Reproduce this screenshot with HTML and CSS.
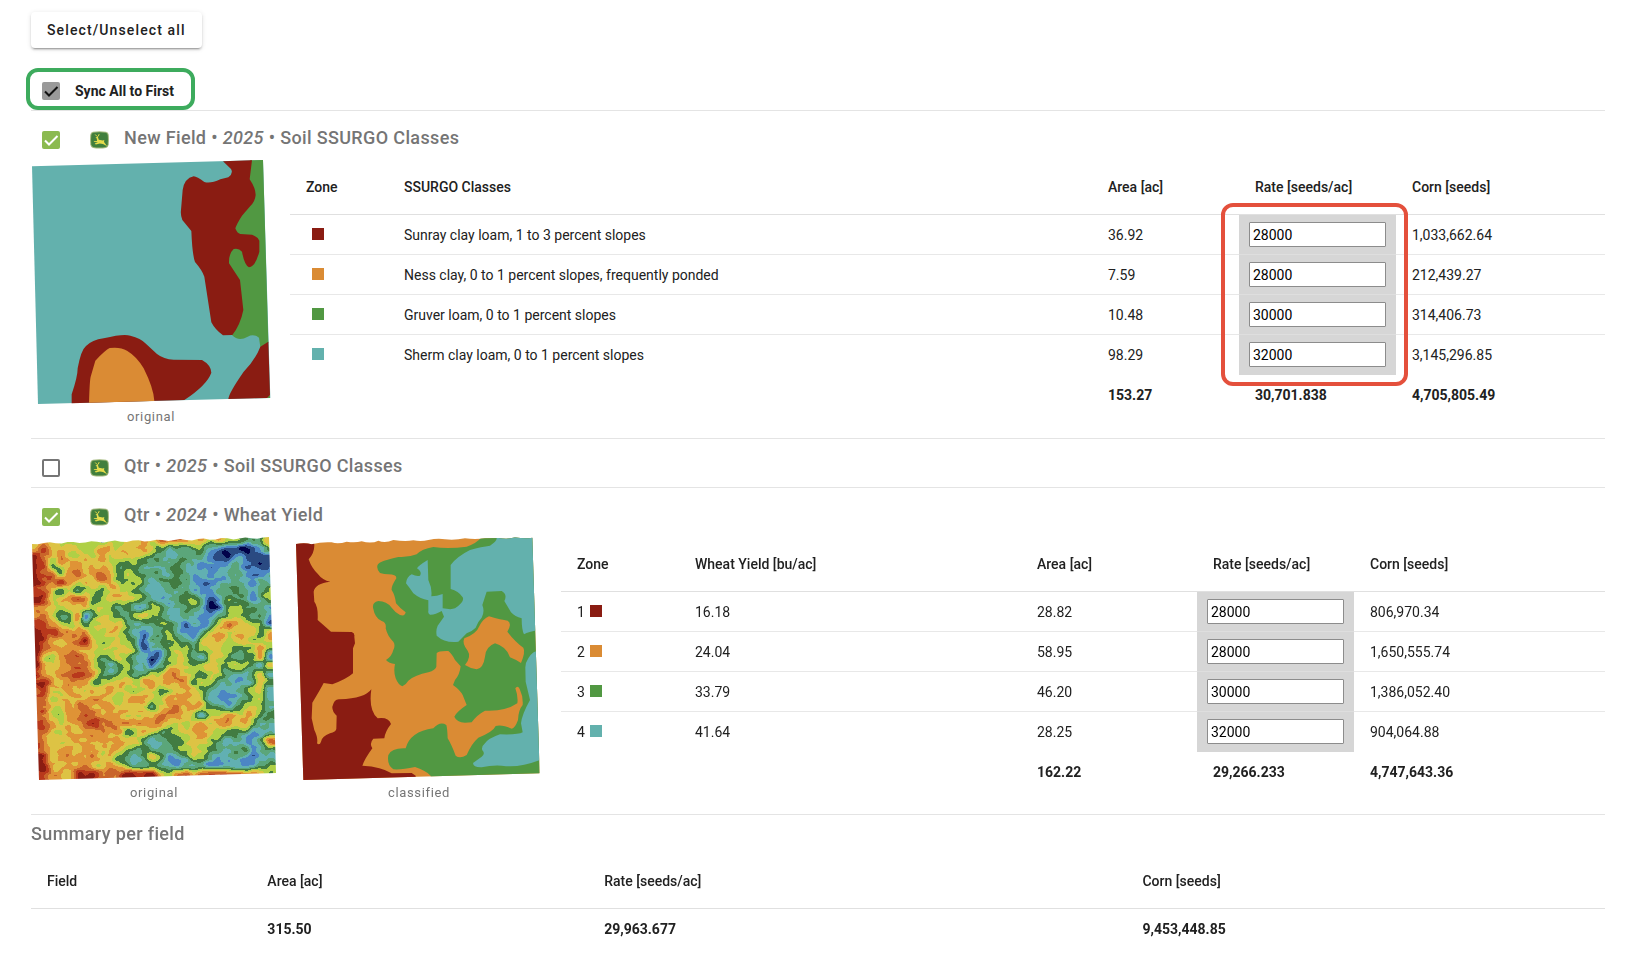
FILE: index.html
```html
<!DOCTYPE html>
<html lang="en">
<head>
<meta charset="utf-8">
<title>Seeding rates</title>
<link rel="stylesheet" href="styles.css">
</head>
<body>
<svg class="defs" aria-hidden="true">
  <symbol id="deere" viewBox="0 0 19 18">
    <path fill="#a3b87c" d="M3 .7Q9.500 -.2 16 .7Q18.400 1.200 18.700 3.700Q19.200 9 18.700 13.800Q18.200 16.400 16 17Q9.500 18.100 3 17Q.8 16.400.3 13.800Q-.2 9 .3 3.700Q.6 1.200 3 .7Z"/>
    <path fill="#417f3c" d="M3.300 1.700Q9.500 .8 15.700 1.700Q17.400 2 17.700 4Q18.200 9 17.700 13.500Q17.300 15.500 15.500 16Q9.500 17 3.500 16Q1.700 15.500 1.300 13.500Q.8 9 1.300 4Q1.600 2 3.300 1.700Z"/>
    <path fill="none" stroke="#e6dc4c" stroke-linecap="round" d="M5.500 3.800L6.800 5.200M9 3.500L8.300 5.200L7.200 6.200"/>
    <path fill="#e6dc4c" d="M5.500 6.400L7.800 5.800L8.800 8.800L12.800 9.400L14.300 9L14 11L17.200 15.200L13 13L9.800 12.600L5.800 13.400L4.700 12.600L8 11.300L4.300 11.100L3.600 10.200L7 9.900L6.800 7.500Z"/>
  </symbol>
</svg>

<main class="page">
  <button class="btn" type="button">Select/Unselect all</button>
  <label class="sync"><input class="check check--grey" type="checkbox" checked>Sync All to First</label>

  <section class="layer">
    <header class="layer-head">
      <input class="check" type="checkbox" checked aria-label="New Field 2025 Soil SSURGO Classes">
      <svg class="brand" aria-hidden="true"><use href="#deere"/></svg>
      <h2 class="title">New Field • <em>2025</em> • Soil SSURGO Classes</h2>
    </header>
    <div class="layer-body">
      <figure class="map">
        <svg class="map-soil" viewBox="32 24 720 744" role="img" aria-label="Soil map">
          <path fill="#63b1ad" d="M35 49L728 30L750 744L53 762Z"/>
          <path fill="#519842" d="M690 31L728 30L744 578L737 588L720 591L716 563Q700 550 682 560Q655 576 635 555L600 400L620 100ZM738 744L749 735V744Z"/>
          <path fill="#8a1c12" d="M608 34L695 31L688 88Q706 115 706 135Q704 155 690 168L665 197Q650 220 645 235Q650 250 660 252L695 254Q712 260 717 272L717 305Q705 350 686 352Q672 345 665 305Q655 293 640 297Q625 310 626 340L659 390L669 480Q660 525 636 555L608 556Q585 540 573 517L552 380Q545 360 524 336Q516 315 513 243L486 210Q480 195 482 180L487 120Q492 85 520 79Q530 80 552 96Q570 102 600 88L624 82Q640 70 632 57Z"/>
          <path fill="#8a1c12" d="M154 760L154 733Q172 680 172 655Q182 600 197 588Q215 570 250 565Q310 550 330 557Q362 565 375 580L410 612Q430 628 460 629L545 630Q572 645 573 668Q560 705 492 750Z"/>
          <path fill="#da8b34" d="M206 758Q208 690 211 680L225 632Q255 600 268 594Q300 590 320 602Q350 620 370 655Q400 715 402 753Z"/>
          <path fill="#8a1c12" d="M744 575L720 590Q705 630 670 665Q625 730 624 747L740 744L749 735Z"/>
        </svg>
        <figcaption>original</figcaption>
      </figure>
      <table class="grid grid--soil">
        <thead>
          <tr><th class="c-zone">Zone</th><th>SSURGO Classes</th><th class="c-area">Area [ac]</th><th class="c-rate">Rate [seeds/ac]</th><th class="c-total">Corn [seeds]</th></tr>
        </thead>
        <tbody>
          <tr><td><span class="zone"><i class="swatch red"></i></span></td><td>Sunray clay loam, 1 to 3 percent slopes</td><td>36.92</td><td class="rate"><input type="text" value="28000" aria-label="Rate, Sunray clay loam"><span class="callout"></span></td><td>1,033,662.64</td></tr>
          <tr><td><span class="zone"><i class="swatch orange"></i></span></td><td>Ness clay, 0 to 1 percent slopes, frequently ponded</td><td>7.59</td><td class="rate"><input type="text" value="28000" aria-label="Rate, Ness clay"></td><td>212,439.27</td></tr>
          <tr><td><span class="zone"><i class="swatch green"></i></span></td><td>Gruver loam, 0 to 1 percent slopes</td><td>10.48</td><td class="rate"><input type="text" value="30000" aria-label="Rate, Gruver loam"></td><td>314,406.73</td></tr>
          <tr><td><span class="zone"><i class="swatch teal"></i></span></td><td>Sherm clay loam, 0 to 1 percent slopes</td><td>98.29</td><td class="rate"><input type="text" value="32000" aria-label="Rate, Sherm clay loam"></td><td>3,145,296.85</td></tr>
        </tbody>
        <tfoot>
          <tr><td></td><td></td><td>153.27</td><td>30,701.838</td><td>4,705,805.49</td></tr>
        </tfoot>
      </table>
    </div>
  </section>

  <section class="layer layer--closed">
    <header class="layer-head">
      <input class="check" type="checkbox" aria-label="Qtr 2025 Soil SSURGO Classes">
      <svg class="brand" aria-hidden="true"><use href="#deere"/></svg>
      <h2 class="title">Qtr • <em>2025</em> • Soil SSURGO Classes</h2>
    </header>
  </section>

  <section class="layer">
    <header class="layer-head">
      <input class="check" type="checkbox" checked aria-label="Qtr 2024 Wheat Yield">
      <svg class="brand" aria-hidden="true"><use href="#deere"/></svg>
      <h2 class="title">Qtr • <em>2024</em> • Wheat Yield</h2>
    </header>
    <div class="layer-body">
      <figure class="map">
        <canvas class="map-yield" id="yield" width="246" height="247" role="img" aria-label="Yield map"></canvas>
        <figcaption>original</figcaption>
      </figure>
      <figure class="map">
        <svg class="map-yield" viewBox="33 30 738 741" role="img" aria-label="Classified yield map">
          <clipPath id="edge"><path d="M33 57Q60 52 80 58Q110 50 140 52Q160 58 185 50Q210 54 230 49Q260 57 280 47Q300 56 325 45Q360 50 385 46Q410 50 430 45Q460 38 480 43Q510 46 540 40Q570 44 600 40L640 39Q670 44 690 37Q720 42 742 38L764 745L55 765Z"/></clipPath>
          <g clip-path="url(#edge)">
            <path fill="#da8b34" d="M30 30H771V771H30Z"/>
            <path fill="#8a1c12" d="M33 50L87 50Q92 80 71 103Q80 130 98 146Q112 165 136 170Q90 175 86 200L88 230Q100 245 98 285Q115 300 138 320L200 321Q210 324 208 335L210 355L204 370L204 445Q185 462 142 478L116 474Q108 490 82 533L80 580L88 615Q100 640 96 655Q104 662 108 650Q110 635 135 625Q153 620 154 612L155 572Q141 560 142 545Q148 520 165 523Q240 520 259 493Q250 555 278 580Q310 575 318 597Q300 620 298 640L265 641Q252 655 262 670Q240 700 232 722Q290 725 320 745L380 744L392 752V771H33Z"/>
            <path fill="#519842" d="M590 36Q575 55 545 65Q490 72 445 66Q410 72 395 88Q370 98 340 96Q285 108 279 118Q272 128 285 144Q298 148 310 148Q335 148 334 160Q318 185 320 195Q330 210 333 235Q345 250 362 262Q360 275 345 270Q330 262 320 248Q305 228 280 228Q262 232 264 248Q270 280 290 288Q305 292 302 310Q308 335 325 350Q332 360 325 375Q320 395 303 405Q312 415 330 417Q325 440 332 460Q340 480 352 484Q362 480 370 467Q390 450 430 442Q452 435 454 425L455 385Q460 377 490 378Q500 385 510 405L527 424Q524 450 510 465L504 480Q525 495 533 510L545 540Q515 560 508 575Q515 592 540 593L560 592Q575 570 600 557Q660 560 697 535Q700 515 691 490Q698 480 704 492Q715 515 713 540Q700 555 699 585Q690 610 680 611Q650 598 632 603Q625 620 580 638Q560 655 545 690Q525 702 512 692Q500 660 488 640Q487 610 484 600Q465 588 445 610Q375 620 362 670Q320 668 310 690Q305 720 325 733Q350 735 390 726Q420 735 437 752V771H771V30Z"/>
            <path fill="#da8b34" d="M540 420Q560 395 548 377Q530 355 538 340Q575 325 582 305Q595 280 612 274Q650 285 668 287Q682 295 667 320Q690 350 715 368Q722 380 708 414Q695 405 675 397Q665 365 630 355Q602 365 600 395Q595 430 575 433Q555 430 540 420Z"/>
            <path fill="#63b1ad" d="M635 30H760V315Q730 320 717 328Q710 315 710 280Q690 275 678 262L658 228Q668 208 650 198L605 200Q600 215 592 240Q600 260 590 278Q578 290 572 308Q560 320 545 325L520 350Q480 355 455 332Q452 315 458 302L477 275L470 258Q450 270 435 269Q428 266 430 258L430 226Q405 222 385 205Q375 190 363 175Q365 155 380 148Q395 155 405 152Q412 140 396 130Q400 122 428 105L430 165Q442 190 439 214Q455 214 473 207L473 250Q500 255 510 250Q540 230 533 217Q520 197 497 192L497 120Q515 95 555 75Q590 65 615 62Q635 50 635 40Z"/>
            <path fill="#63b1ad" d="M765 376Q742 378 730 400Q720 415 721 430L722 470L735 525Q710 570 708 595L713 622Q700 630 645 628Q610 640 600 655Q588 665 592 676Q602 685 590 695L564 714Q565 728 590 727Q620 720 650 722Q700 730 763 706H771Z"/>
          </g>
        </svg>
        <figcaption>classified</figcaption>
      </figure>
      <table class="grid grid--yield">
        <thead>
          <tr><th class="c-zone">Zone</th><th>Wheat Yield [bu/ac]</th><th class="c-area">Area [ac]</th><th class="c-rate">Rate [seeds/ac]</th><th class="c-total">Corn [seeds]</th></tr>
        </thead>
        <tbody>
          <tr><td><span class="zone">1<i class="swatch red"></i></span></td><td>16.18</td><td>28.82</td><td class="rate"><input type="text" value="28000" aria-label="Rate, zone 1"></td><td>806,970.34</td></tr>
          <tr><td><span class="zone">2<i class="swatch orange"></i></span></td><td>24.04</td><td>58.95</td><td class="rate"><input type="text" value="28000" aria-label="Rate, zone 2"></td><td>1,650,555.74</td></tr>
          <tr><td><span class="zone">3<i class="swatch green"></i></span></td><td>33.79</td><td>46.20</td><td class="rate"><input type="text" value="30000" aria-label="Rate, zone 3"></td><td>1,386,052.40</td></tr>
          <tr><td><span class="zone">4<i class="swatch teal"></i></span></td><td>41.64</td><td>28.25</td><td class="rate"><input type="text" value="32000" aria-label="Rate, zone 4"></td><td>904,064.88</td></tr>
        </tbody>
        <tfoot>
          <tr><td></td><td></td><td>162.22</td><td>29,266.233</td><td>4,747,643.36</td></tr>
        </tfoot>
      </table>
    </div>
  </section>

  <section class="layer summary">
    <h2 class="title">Summary per field</h2>
    <table class="grid grid--summary">
      <thead><tr><th class="s-field">Field</th><th class="s-area">Area [ac]</th><th class="s-rate">Rate [seeds/ac]</th><th>Corn [seeds]</th></tr></thead>
      <tfoot><tr><td></td><td>315.50</td><td>29,963.677</td><td>9,453,448.85</td></tr></tfoot>
    </table>
  </section>
</main>
<script src="yield.js"></script>
</body>
</html>
```

FILE: styles.css
```css
* { box-sizing: border-box; }

body {
  margin: 0;
  background: #fff;
  color: #212121;
  font-family: Roboto, sans-serif;
  font-size: 14px;
  line-height: 20px;
}

.defs { display: none; }

.page {
  display: flex;
  flex-direction: column;
  padding: 12px 27px 16px 31px;
}

.btn {
  align-self: flex-start;
  height: 36px;
  margin-bottom: 20px;
  padding: 0 16px;
  border: 0;
  border-radius: 4px;
  background: #fff;
  color: #212121;
  font: 500 14px/20px Roboto, sans-serif;
  letter-spacing: 0.08em;
  box-shadow: 0 3px 1px -2px rgba(0, 0, 0, .2), 0 2px 2px 0 rgba(0, 0, 0, .14), 0 1px 5px 0 rgba(0, 0, 0, .12);
}

.sync {
  position: relative;
  z-index: 1;
  align-self: flex-start;
  display: flex;
  align-items: center;
  gap: 15px;
  height: 42px;
  margin-left: -5px;
  padding: 4px 17px 0 12px;
  border: 4px solid #3dab5d;
  border-radius: 12px;
  font-weight: 700;
}

.check {
  appearance: none;
  flex: none;
  width: 18px;
  height: 18px;
  margin: 0;
  border: 2px solid #757575;
  border-radius: 2px;
}
.check:checked {
  border: 0;
  background: #8bba50 url("data:image/svg+xml,%3Csvg xmlns='http://www.w3.org/2000/svg' viewBox='0 0 18 18'%3E%3Cpath fill='none' stroke='%23fff' stroke-width='2' d='M3 9.500L7 13.500L15.500 5'/%3E%3C/svg%3E");
}
.check--grey:checked {
  background: #9a9a9a url("data:image/svg+xml,%3Csvg xmlns='http://www.w3.org/2000/svg' viewBox='0 0 18 18'%3E%3Cpath fill='none' stroke='%23111' stroke-width='2' d='M3 9.500L7 13.500L15.500 5'/%3E%3C/svg%3E");
}

.layer { border-top: 1px solid #e4e4e4; }
.layer--closed { padding-bottom: 1px; }

.layer-head {
  display: flex;
  align-items: center;
  height: 47px;
  padding: 11px 0 0 11px;
}

.brand {
  width: 19px;
  height: 18px;
  margin: 0 15px 0 30px;
}

.title {
  margin: 0;
  padding-bottom: 4px;
  color: #757575;
  font-size: 18px;
  font-weight: 500;
  line-height: 24px;
  letter-spacing: 0.02em;
}

.layer-body {
  display: flex;
  align-items: flex-start;
  gap: 19px;
  padding-bottom: 11px;
}

.map {
  flex: none;
  margin: 0;
  color: #757575;
  font-size: 13px;
  text-align: center;
  letter-spacing: 0.05em;
}
.map figcaption { padding-top: 1px; }
.map-soil, .map-yield { display: block; }
.map-soil { width: 240px; height: 248px; }
.map-yield { width: 246px; height: 247px; }

.grid {
  flex: 1;
  width: 100%;
  border-collapse: separate;
  border-spacing: 0;
  table-layout: fixed;
  text-align: left;
}
.grid th {
  height: 57px;
  padding: 2px 16px 0;
  border-bottom: 1px solid #e0e0e0;
  font-weight: 500;
}
.grid td { height: 40px; padding: 0 16px; }
.grid tbody td { border-bottom: 1px solid #e8e8e8; }
.grid tbody tr:last-child td { border-bottom-color: transparent; }
.grid tfoot td { font-weight: 700; }

.grid td.rate {
  position: relative;
  padding: 0 10px;
  background: #d6d6d6;
  border-bottom-color: #dedede;
}
.grid tbody tr:last-child td.rate { border-bottom-color: #d6d6d6; }
.rate input {
  display: block;
  width: 100%;
  height: 25px;
  padding: 0 3px;
  border: 1px solid #8c8c8c;
  border-radius: 1px;
  background: #fff;
  color: #000;
  font: 14px/20px Roboto, sans-serif;
}

.callout {
  position: absolute;
  top: -12px;
  left: -18px;
  right: -12px;
  height: 183px;
  border: 4px solid #e4503c;
  border-radius: 12px;
  pointer-events: none;
}

.zone { display: flex; align-items: center; gap: 5px; }
.grid--soil .zone { padding-left: 6px; }
.swatch { width: 12px; height: 12px; margin-bottom: 2px; }
.red { background: #8a1c12; }
.orange { background: #da8b34; }
.green { background: #519842; }
.teal { background: #63b1ad; }

.grid--soil .c-zone { width: 98px; }
.grid--soil .c-area { width: 147px; }
.grid--soil .c-total { width: 209px; }
.c-rate { width: 157px; }
.grid--yield .c-zone { width: 118px; }
.grid--yield .c-area { width: 176px; }
.grid--yield .c-total { width: 251px; }

.summary .title { padding: 7px 0 6px; }
.s-field { width: 14%; }
.s-area { width: 21.4%; }
.s-rate { width: 34.2%; }
```

FILE: yield.js
```js
// Yield levels sampled on a coarse grid, one hex digit per node (0 = lowest, b = highest).
const rows = [
  "43455555655443423334454566764",
  "31444454344443567776689aaba86",
  "0243444534445567877779ab99aaa",
  "01643344446667777678999979aaa",
  "02263243246567777678898878998",
  "01213444345556877678998878978",
  "12464755644567887778997767875",
  "014432365444567887658a8677975",
  "234544455576885688768ba656678",
  "32476386456754568878997656778",
  "11356475444677766798985334569",
  "01123335544689775799753444464",
  "0134321455457a766678543444554",
  "0233333454446a886556544566536",
  "04532234654678a96457854577639",
  "03433224686578975455545655784",
  "13432123676576553345655778748",
  "11343336544453343336557788746",
  "21443444434555465444678887548",
  "22544333345433453334589987658",
  "22443323334444643243467875457",
  "22453322333444433345854344466",
  "12344321223333334454343344577",
  "22443433333654566543345666888",
  "23444333343446876654456878972",
  "12443433434566777654567876886",
  "01433333446786458875578878988",
  "00343434434677678978799889875",
  "01334101222011045323222223345"
];

const palette = [
  [139, 28, 18], [184, 56, 28], [201, 100, 42], [223, 147, 54],
  [221, 195, 68], [175, 208, 70], [66, 124, 66], [91, 166, 122],
  [97, 176, 178], [76, 134, 196], [42, 74, 130], [2, 2, 74]
];

const last = rows.length - 1;
const node = (r, c) => {
  const row = rows[Math.max(0, Math.min(last, r))];
  return parseInt(row[Math.max(0, Math.min(row.length - 1, c))], 16);
};
const cubic = (a, b, c, d, t) =>
  b + 0.5 * t * (c - a + t * (2 * a - 5 * b + 4 * c - d + t * (3 * (b - c) + d - a)));

function sample(grid, x, y) {
  const c = Math.floor(x), r = Math.floor(y);
  const line = k => cubic(grid(k, c - 1), grid(k, c), grid(k, c + 1), grid(k, c + 2), x - c);
  return cubic(line(r - 1), line(r), line(r + 1), line(r + 2), y - r);
}

// Fine variation between the sampled nodes.
const hash = (r, c) => {
  const v = Math.sin(r * 127.1 + c * 311.7) * 43758.5453;
  return (v - Math.floor(v)) * 2 - 1;
};

const canvas = document.getElementById("yield");
const ctx = canvas.getContext("2d");
const w = canvas.width, h = canvas.height;

ctx.save();
ctx.beginPath();
ctx.moveTo(1, 9);
for (let i = 1; i <= 40; i++) {
  ctx.lineTo(1 + i * 5.925, 8.5 - i * 0.145 + Math.sin(i * 1.7) * 0.9);
}
ctx.lineTo(245, 238);
ctx.lineTo(8, 245);
ctx.closePath();

const image = ctx.createImageData(w, h);
for (let y = 0; y < h; y++) {
  for (let x = 0; x < w; x++) {
    const gx = (x * 3 + 33 - 45) / 25, gy = (y * 3 + 30 - 45) / 25;
    const v = sample(node, gx, gy) + 0.7 * sample(hash, x / 6, y / 4);
    const rgb = palette[Math.max(0, Math.min(11, Math.round(v)))];
    image.data.set([...rgb, 255], (y * w + x) * 4);
  }
}
const layer = document.createElement("canvas");
layer.width = w;
layer.height = h;
layer.getContext("2d").putImageData(image, 0, 0);
ctx.clip();
ctx.drawImage(layer, 0, 0);
ctx.restore();
```
